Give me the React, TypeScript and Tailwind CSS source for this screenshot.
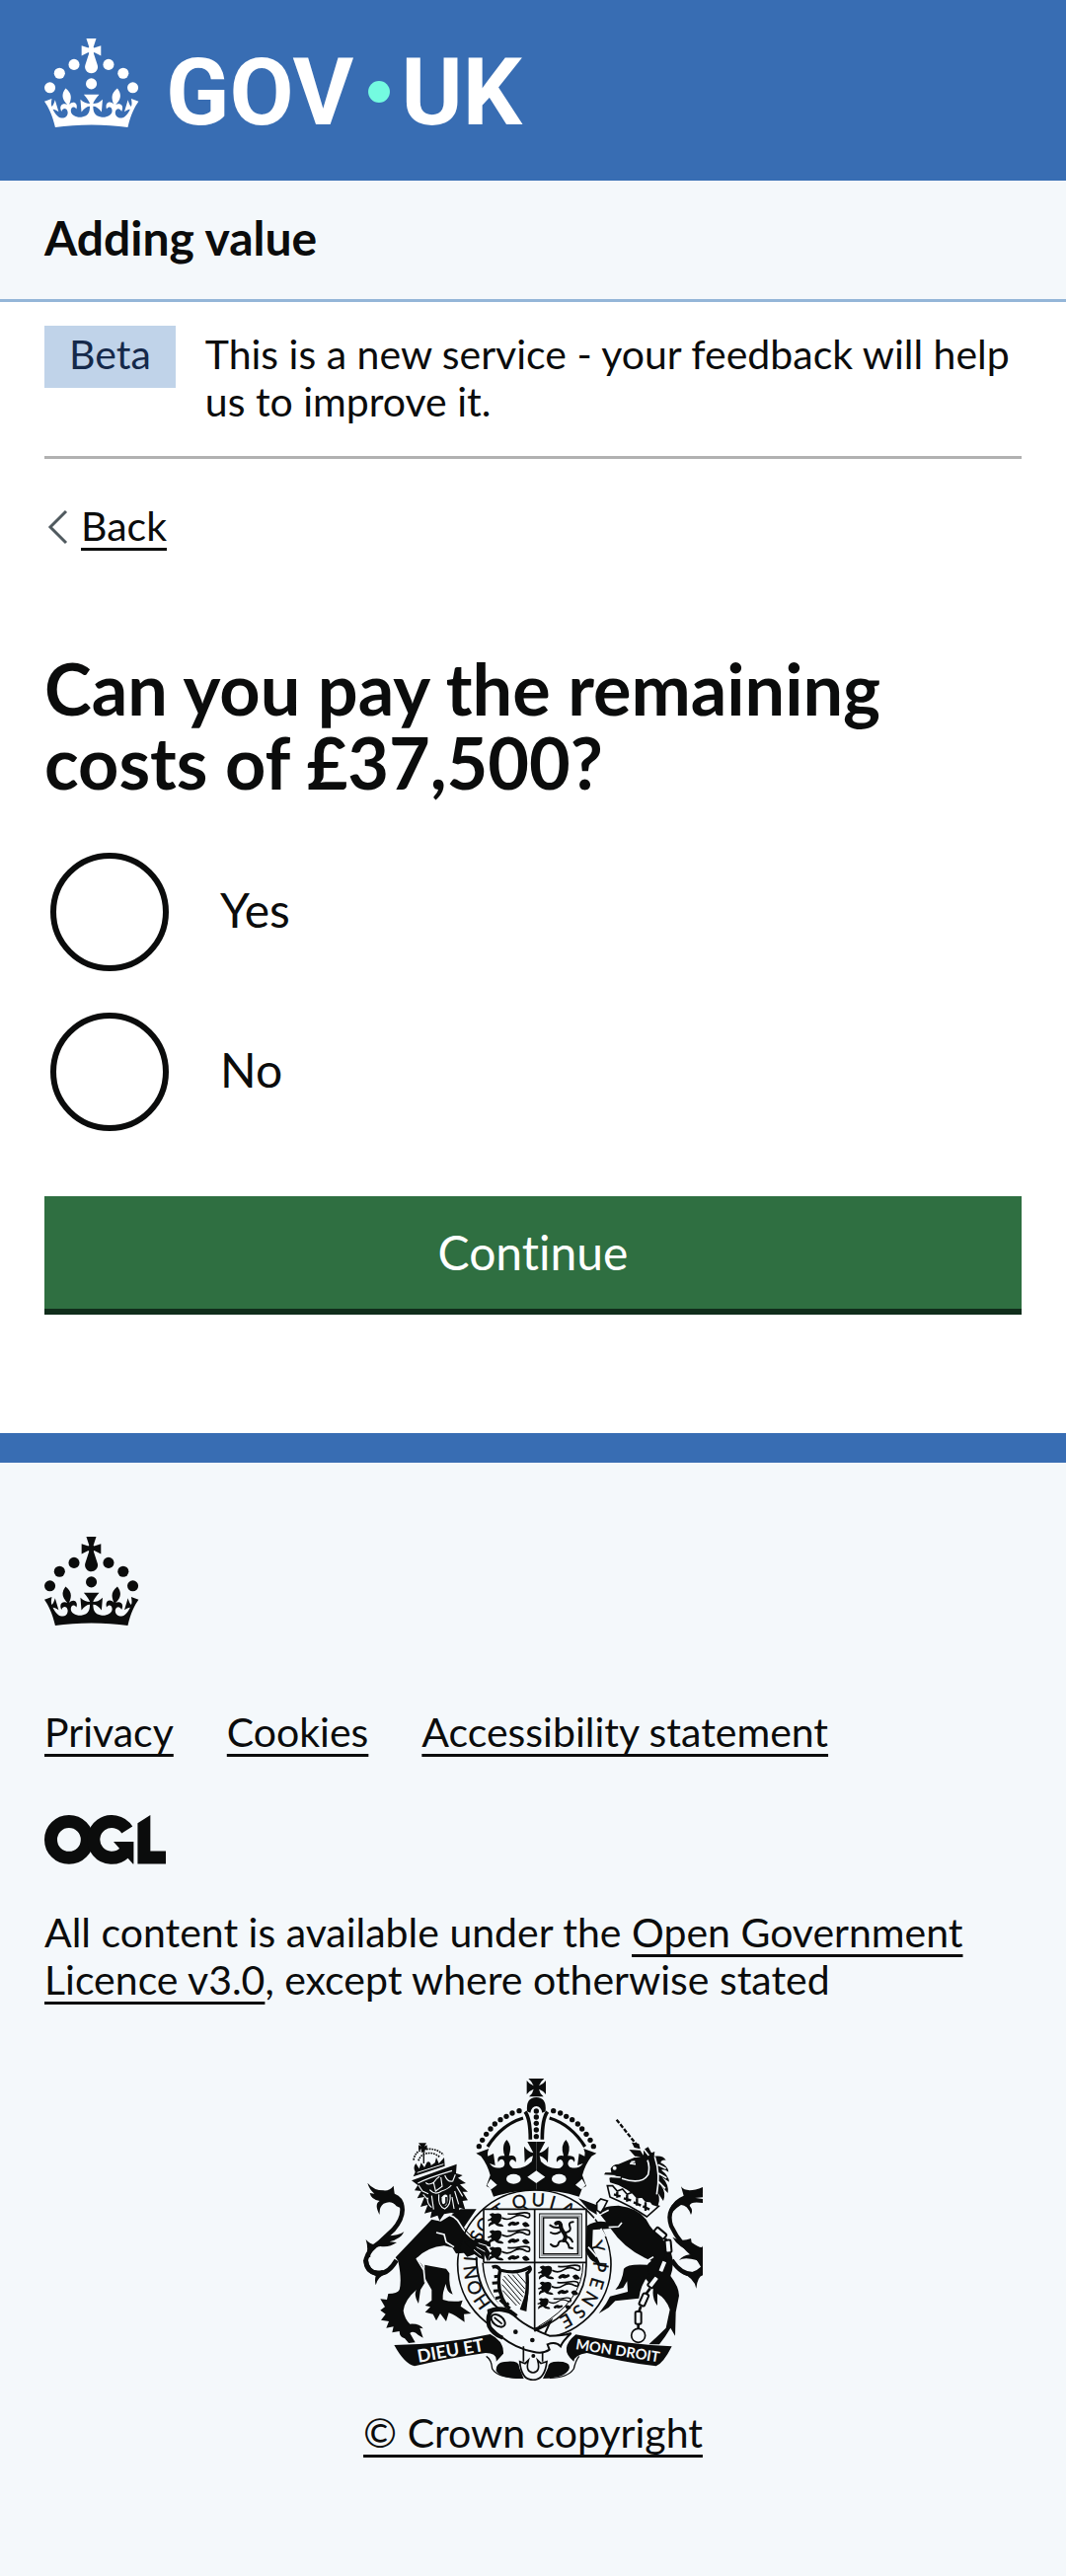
import React from "react";

const CROWN_PATH =
  "M33.1,9.8c.2-.1.3-.3.5-.5l4.6,2.4v-6.8l-4.6,1.5c-.1-.2-.3-.3-.5-.5l1.9-5.9h-6.7l1.9,5.9c-.2.1-.3.3-.5.5l-4.6-1.5v6.8l4.6-2.4c.1.2.3.3.5.5l-2.6,8c-.9,2.8,1.2,5.7,4.1,5.7h0c3,0,5.1-2.9,4.1-5.7l-2.6-8ZM37,37.9s-3.4,3.8-4.1,6.1c2.2,0,4.2-.5,6.4-2.8l-.7,8.5c-2-2.8-4.4-4.1-5.7-3.8.1,3.1.5,6.7,5.8,7.2,3.7.3,6.7-1.5,7-3.8.4-2.6-2-4.3-3.7-1.6-1.4-4.5,2.4-6.1,4.9-3.2-1.9-4.5-1.8-7.7,2.4-10.9,3,4,2.6,7.3-1.2,11.1,2.4-1.3,6.2,0,4,4.6-1.2-2.8-3.7-2.2-4.2.2-.3,1.7.7,3.7,3,4.2,1.9.3,4.7-.9,7-5.9-1.3,0-2.4.7-3.9,1.7l2.4-8c.6,2.3,1.4,3.7,2.2,4.5.6-1.6.5-2.8,0-5.3l5,1.8c-2.6,3.6-5.2,8.7-7.3,17.5-7.4-1.1-15.7-1.7-24.5-1.7h0c-8.8,0-17.1.6-24.5,1.7-2.1-8.9-4.7-13.9-7.3-17.5l5-1.8c-.5,2.5-.6,3.7,0,5.3.8-.8,1.6-2.3,2.2-4.5l2.4,8c-1.5-1-2.6-1.7-3.9-1.7,2.3,5,5.2,6.2,7,5.9,2.3-.4,3.3-2.4,3-4.2-.5-2.4-3-3.1-4.2-.2-2.2-4.6,1.6-6,4-4.6-3.7-3.7-4.2-7.1-1.2-11.1,4.2,3.2,4.3,6.4,2.4,10.9,2.5-2.8,6.3-1.3,4.9,3.2-1.8-2.7-4.1-1-3.7,1.6.3,2.3,3.3,4.1,7,3.8,5.4-.5,5.7-4.2,5.8-7.2-1.3-.2-3.7,1-5.7,3.8l-.7-8.5c2.2,2.3,4.2,2.7,6.4,2.8-.7-2.3-4.1-6.1-4.1-6.1h10.6,0Z";

function CrownShapes() {
  return (
    <g>
      <circle cx="20" cy="17.6" r="3.7" />
      <circle cx="10.2" cy="23.5" r="3.7" />
      <circle cx="3.7" cy="33.2" r="3.7" />
      <circle cx="43.3" cy="17.6" r="3.7" />
      <circle cx="53.2" cy="23.5" r="3.7" />
      <circle cx="59.7" cy="33.2" r="3.7" />
      <circle cx="31.7" cy="30.6" r="3.7" />
      <path d={CROWN_PATH} />
    </g>
  );
}

function GovLogo() {
  return (
    <svg viewBox="0 0 324 60" className="block h-[90px] w-[486px] overflow-visible" fill="#fff" role="img" aria-label="GOV.UK">
      <CrownShapes />
      <circle cx="226" cy="36" r="7.3" fill="#74fbe0" />
      <g fontFamily="Roboto, 'Liberation Sans', sans-serif" fontWeight="700" fontSize="63">
        <text x="82" y="58">GOV</text>
        <text x="241" y="58">UK</text>
      </g>
    </svg>
  );
}

function OglLogo() {
  return (
    <svg viewBox="0 0 483 196" className="block h-[50px] w-[123px]" role="img" aria-label="Open Government Licence">
      <g fill="none" stroke="#0b0c0c" strokeWidth="51">
        <circle cx="97.8" cy="97.8" r="72.3" />
        <path d="M329 59A72.3 72.3 0 1 0 318 150" />
      </g>
      <path fill="#0b0c0c" d="M275 106h80v88h-3ZM370.800 32.400 421.500 0v143H483v51H370.800Z" />
    </svg>
  );
}

const PEARLS = [[528, 146], [507, 153], [489, 163], [471, 173], [454, 186], [441, 201], [428, 217], [416, 235], [406, 254]];

const MOTTO: [string, number][] = [
  ["H", -125], ["O", -111], ["N", -97], ["I", -85], ["S", -64], ["O", -52], ["T", -34],
  ["Q", -14], ["U", 3], ["I", 16], ["A", 31], ["Y", 74], ["P", 92], ["E", 107], ["N", 122], ["S", 137], ["E", 151],
];

function CrownHalf() {
  return (
    <g>
      {PEARLS.map(([x, y]) => (
        <circle key={x} cx={x} cy={y} r="8" />
      ))}
      <path d="M540 168Q474 188 432 255" fill="none" stroke="#0b0c0c" strokeWidth="10" />
      <path d="M546 149Q562 170 562 233" fill="none" stroke="#0b0c0c" strokeWidth="11" />
      <path d="M397 275 436 261Q430 274 433 284L450 276 455 312 438 306Q452 326 478 317Q488 310 481 297Q472 288 464 302Q458 280 484 283Q473 252 490 234Q508 252 497 283Q522 278 518 302Q507 288 500 299Q494 312 508 320Q540 326 566 300L570 283Q552 290 545 304L543 254Q554 270 571 274L553 240H580V388Q510 388 450 407L440 380 428 375 440 342Q432 310 412 284Z" />
      <path d="M441 353 461 371 443 385 430 372Z" fill="#f4f8fb" />
      <ellipse cx="511" cy="353" rx="22" ry="15" fill="#f4f8fb" />
    </g>
  );
}

function PassantLion({ x, y, s }: { x: number; y: number; s: number }) {
  return (
    <g transform={`translate(${x} ${y}) scale(${s})`}>
      <path d="M4 6Q14-2 20 4Q40-2 42 12Q42 24 32 34Q46 34 48 42Q30 46 20 34Q10 36 2 44Q0 32 12 28Q2 20 12 14ZM60 36Q72 22 84 30Q96 24 96 34Q84 44 72 38Q64 46 60 36ZM104 34Q116 22 124 36Q132 42 118 44Q108 46 104 34Z" />
      <path d="M42 16Q60 26 78 14T116 14Q130 20 126 4Q116-2 98 2T60 4M12 20 0 24" fill="none" stroke="#0b0c0c" strokeWidth="5" />
    </g>
  );
}

const CHAIN: [number, number, number][] = [[957, 518, -50], [981, 558, -5], [964, 619, 22], [936, 666, 38], [907, 720, 24], [890, 775, 0]];

function RoyalArms() {
  return (
    <svg viewBox="54 48 1032 918" className="block h-[306px] w-[344px]" fill="#0b0c0c" role="img" aria-label="Royal coat of arms">
      {/* St Edward's crown */}
      <path d="M556 48H604Q592 58 588 70Q600 66 609 54V96Q600 84 588 80Q590 92 602 103H558Q570 92 572 80Q560 84 551 96V54Q560 66 572 70Q568 58 556 48Z" />
      <path d="M552 148Q548 105 580 105Q612 105 608 148L598 152Q594 132 580 132Q566 132 562 152Z" />
      {[147, 165, 184, 204, 224].map((y) => (
        <circle key={y} cx="580" cy={y} r="8" />
      ))}
      <CrownHalf />
      <g transform="translate(1160 0) scale(-1 1)">
        <CrownHalf />
      </g>
      <path d="M580 328 607 347 580 366 553 347Z" fill="#f4f8fb" />

      {/* Lion supporter */}
      <path d="M155 600Q128 646 95 640Q62 634 62 600Q68 570 104 546L145 508Q182 466 170 428Q160 402 132 404" fill="none" stroke="#0b0c0c" strokeWidth="14" />
      <path d="M67 365Q86 388 116 388Q134 390 146 374L150 404Q170 414 178 446L155 436Q140 416 116 428Q102 438 104 462Q86 430 104 420Q78 416 74 396L88 398Q72 384 67 365ZM62 537Q76 554 92 552L128 526Q160 526 178 514Q168 536 134 544L156 546Q134 562 106 558Q72 560 76 590L60 596Q72 570 62 537ZM54 600Q60 640 92 648Q88 660 92 676Q98 650 126 640L112 630Q74 640 68 596Z" />
      <path d="M350 445H398L360 500Q385 535 415 538L440 545 438 560 420 556 440 575 435 600 420 580 428 602 405 592 392 582 370 590 360 578 336 580 325 562 300 556Q250 560 216 594L234 616Q246 640 243 666L228 690 222 732Q206 704 216 690Q180 720 176 754Q180 780 196 794Q226 792 236 808L226 806 236 836 222 828Q206 812 196 822L212 850 192 852 180 838Q164 834 164 816L142 820 146 802 124 806 132 786 108 782 122 764 106 752 120 742 106 718 126 720 130 702Q158 702 164 690Q172 660 160 602L152 592 262 476 290 482Z" />
      <path d="M241 614Q280 622 306 626L316 640Q314 680 326 704Q308 700 305 672Q294 700 296 720Q328 730 356 722L350 740 382 762 360 764 362 788 336 770Q326 764 314 760L306 786 288 762 276 784 266 764 242 758 258 742 242 738 262 722 262 690 240 652Z" />
      <path d="M296 462Q330 458 348 490T392 538M276 516 300 522 306 545 330 560M242 668 238 630 216 594" fill="none" stroke="#f4f8fb" strokeWidth="5" />
      <path d="M201 358 338 308 336 336 356 342 342 350 366 366 348 370 372 392 356 392 372 418 356 420 364 446 346 440 344 462 322 456 300 460 286 480 280 464 258 472 262 452 240 458 250 432 228 438 240 408 218 412 230 390 210 388 220 372Z" />
      <g fill="none" stroke="#f4f8fb" strokeWidth="3.500">
        <path d="M220 366Q250 350 324 328M222 372 234 390 252 398M244 364Q252 374 268 364Q278 350 286 346M302 342Q310 364 326 360L334 340M268 364 274 390 294 376 290 348M256 386Q272 404 292 390Q312 384 322 372M250 410Q246 426 262 440M284 400Q280 436 302 444Q322 432 318 400M262 404 268 446M332 390 344 430M338 376 356 406M324 408 330 444M236 400 250 416" />
      </g>
      <path d="M290 412Q292 434 304 434Q312 430 310 404Q302 394 290 412Z" fill="#f4f8fb" />
      <path d="M290 410V426Q298 438 306 426V408" fill="none" stroke="#0b0c0c" strokeWidth="5" />
      <path d="M206 346 212 332Q204 318 214 306L224 322 230 304 240 318 248 302Q258 298 260 312L272 304 276 288 284 306 300 288 302 314Z" />
      <path d="M218 334 298 308" stroke="#f4f8fb" strokeWidth="3" />
      <path d="M207 296Q212 268 236 264Q274 256 298 280M222 298Q226 284 238 278Q264 268 286 286" fill="none" stroke="#0b0c0c" strokeWidth="5" strokeDasharray="5 3" />
      <path d="M238 272V306" stroke="#0b0c0c" strokeWidth="4" />
      <path d="M222 244H246L240 254 248 250V266L240 262 242 272H230L232 262 222 266V250L230 254Z" />

      {/* Garter ring and motto */}
      <ellipse cx="574" cy="613" rx="233" ry="226" fill="none" stroke="#0b0c0c" strokeWidth="5" />
      <path d="M398 590Q398 690 464 746M418 608Q424 690 476 738" fill="none" stroke="#0b0c0c" strokeWidth="6" />
      <g fontFamily="Lato, 'Liberation Sans', sans-serif" fontWeight="400" fontSize="55" textAnchor="middle" stroke="#0b0c0c" strokeWidth="1">
        {MOTTO.map(([c, a]) => (
          <text key={a} x="576" y="436" transform={`rotate(${a} 576 613)`}>
            {c}
          </text>
        ))}
      </g>
      {/* Shield */}
      <path d="M420 445H732V610Q732 740 575 816Q424 740 420 607Z" fill="#f4f8fb" />
      <path d="M420 607V445H732V610Q734 746 575 816V445M420 607H732" fill="none" stroke="#0b0c0c" strokeWidth="5" />
      <path d="M722 610Q722 724 586 802" fill="none" stroke="#0b0c0c" strokeWidth="3" />
      <PassantLion x={433} y={455} s={1} />
      <PassantLion x={433} y={507} s={1} />
      <PassantLion x={433} y={558} s={1} />
      <PassantLion x={586} y={615} s={1} />
      <PassantLion x={586} y={664} s={0.96} />
      <PassantLion x={584} y={714} s={0.8} />
      <rect x="590" y="459" width="128" height="134" fill="none" stroke="#0b0c0c" strokeWidth="3" />
      <rect x="597" y="466" width="114" height="120" fill="none" stroke="#9a9c9e" strokeWidth="5" />
      <rect x="602" y="471" width="104" height="110" fill="none" stroke="#0b0c0c" strokeWidth="4" />
      <g fill="none" stroke="#0b0c0c" strokeLinecap="round">
        <path d="M640 488Q650 482 654 492Q654 506 662 514Q674 528 664 540" strokeWidth="12" />
        <path d="M650 500Q636 504 622 494M652 514Q638 524 624 516M664 540Q678 546 680 562L690 564M660 542Q648 540 646 554Q636 564 624 552M670 528Q684 530 690 544M670 516Q688 512 682 498T692 484" strokeWidth="6" />
      </g>
      {/* Harp */}
      <path d="M446 622Q462 614 470 630Q520 644 560 622Q566 630 552 640Q556 700 542 750M470 630Q456 690 490 740M470 720 500 748" fill="none" stroke="#0b0c0c" strokeWidth="10" />
      <path d="M556 662V700L550 756 530 750 544 710Z" />
      <path d="M452 650 470 648M446 670 468 668M450 694 470 692M456 716 474 712M484 742 496 730" stroke="#0b0c0c" strokeWidth="9" />
      <path d="M478 658 534 724M482 648 540 712M494 644 544 700M508 644 546 688M522 640 550 672M476 674 530 734M478 692 520 738" stroke="#0b0c0c" strokeWidth="3" />

      {/* Lion's paw over the shield */}
      <path d="M362 545 412 534 440 545 442 560 426 556 440 578 432 604 420 578 410 594 394 582Z" />
      <path d="M404 548 430 556M398 560 424 574M390 568 412 586" stroke="#f4f8fb" strokeWidth="3" />

      {/* Garter buckle */}
      <path d="M434 752Q466 736 504 754Q520 790 620 830Q660 830 686 822Q660 846 654 862Q640 846 614 856L620 872Q600 886 570 878Q500 866 440 802Z" fill="#f4f8fb" stroke="#0b0c0c" strokeWidth="6" />
      <path d="M520 770Q490 744 448 752Q428 764 436 800Q448 826 478 836" fill="none" stroke="#0b0c0c" strokeWidth="12" />
      <ellipse cx="464" cy="784" rx="24" ry="15" transform="rotate(38 464 784)" fill="#f4f8fb" stroke="#0b0c0c" strokeWidth="6" />
      <path d="M452 774 476 794" stroke="#0b0c0c" strokeWidth="5" />
      <circle cx="517" cy="818" r="7" />
      <circle cx="568" cy="843" r="7" />
      <path d="M574 816 624 784 606 824M576 808 600 800" fill="none" stroke="#0b0c0c" strokeWidth="6" />

      {/* Lower scroll */}
      <path d="M428 892Q444 902 446 930Q462 958 530 958M710 892Q700 904 694 930Q676 958 620 958" fill="none" stroke="#0b0c0c" strokeWidth="4" />
      <path d="M458 936Q456 908 494 908Q530 906 528 926L542 960Q470 960 458 936ZM680 930Q686 908 646 908Q614 908 616 926L600 960Q670 958 680 930Z" />
      <path d="M541 862V908M599 880V908" stroke="#0b0c0c" strokeWidth="5" />
      <circle cx="571" cy="891" r="6" />
      <path d="M530 908Q534 964 570 964T612 908L594 914 584 904Q594 940 570 942Q546 940 556 904L546 914Z" fill="#f4f8fb" stroke="#0b0c0c" strokeWidth="5" />

      {/* Motto scrolls */}
      <path d="M148 858Q300 856 440 825Q482 846 480 884L458 908Q462 882 426 882Q310 898 210 922Q180 916 148 858Z" />
      <path d="M700 826Q850 856 992 862Q966 914 944 922Q850 912 734 882Q696 888 694 908Q646 870 700 826Z" />
      <g fill="#f4f8fb" fontFamily="Lato, 'Liberation Sans', sans-serif" fontWeight="700">
        <text transform="translate(222 911) rotate(-10)" fontSize="54">DIEU ET</text>
        <text transform="translate(698 870) rotate(9)" fontSize="44">MON DROIT</text>
      </g>

      {/* Unicorn supporter */}
      <path d="M824 173 892 258" stroke="#0b0c0c" strokeWidth="7" strokeDasharray="13 5" fill="none" />
      <path d="M862 264 896 266 908 286 880 284ZM870 242 892 246 896 262 878 258Z" />
      <path d="M806 322Q812 308 830 308L878 288Q896 290 906 280L906 264 920 256 930 274 940 270 938 284Q966 280 974 296Q960 294 958 304Q980 314 982 332Q968 322 960 326Q982 342 984 362L962 348Q984 370 980 396L958 372Q976 394 966 420L950 396Q960 424 944 442L900 418 856 386 830 372 804 364 802 350 824 342 786 340 790 334 808 334Z" />
      <circle cx="818" cy="320" r="6" fill="#f4f8fb" />
      <path d="M864 306 882 308M868 302 880 300M840 352Q900 372 920 340Q926 316 918 296M906 262 922 282M940 286Q958 340 946 400M950 310 974 322M952 336 976 350M952 362 972 382M808 346 836 348" fill="none" stroke="#f4f8fb" strokeWidth="5" />
      <path d="M796 374 804 408Q870 436 916 468L952 436 934 430 928 422 912 420 902 408 886 410 872 394 856 400 842 384 826 390 812 374Z" fill="#f4f8fb" stroke="#0b0c0c" strokeWidth="5" />
      <path d="M826 392V410M816 400 836 406M856 402V422M846 412 868 418M886 412V434M876 424 898 434M912 424V450M904 436 924 446" stroke="#0b0c0c" strokeWidth="7" />
      <path d="M708 412 762 432 764 462 738 446ZM770 456Q780 434 830 434Q888 440 914 476Q930 510 978 550Q1006 600 988 648Q1014 682 1014 708L1004 758 1002 830 988 806 972 832 954 856H922Q950 830 974 806L986 750Q974 716 948 702L948 738Q930 714 936 684L912 656Q906 616 930 602Q850 570 806 504L752 508 750 560 774 610Q742 610 730 570Q732 520 734 496Q760 478 792 484Z" />
      <path d="M800 500 830 498 840 486M752 478 772 462 800 448M776 504 790 528M738 560 764 590M920 600 936 590" fill="none" stroke="#f4f8fb" strokeWidth="5" />
      <path d="M918 614Q856 610 846 626Q842 664 820 690L844 684 856 664 858 696 804 710 792 732 770 762 800 744 820 724 892 716Q896 676 922 644Z" />
      <path d="M764 426 776 414 796 420 786 440 776 456 764 448Z" fill="#f4f8fb" stroke="#0b0c0c" strokeWidth="5" />
      <path d="M752 590 768 614 800 620" fill="none" stroke="#0b0c0c" strokeWidth="5" />
      {CHAIN.map(([x, y, a]) => (
        <rect key={y} x={x - 9} y={y - 19} width="18" height="38" rx="5" transform={`rotate(${a} ${x} ${y})`} fill="#f4f8fb" stroke="#0b0c0c" strokeWidth="6" />
      ))}
      <path d="M972 534 976 542M976 580 970 600M956 638 948 650M926 686 914 702M898 740 892 756M890 794V808" stroke="#0b0c0c" strokeWidth="8" />
      <circle cx="890" cy="829" r="21" fill="none" stroke="#0b0c0c" strokeWidth="5" />
      <path d="M992 600Q1030 660 1086 636M1086 606Q1020 560 990 496Q976 454 1004 430Q1030 404 1086 402" fill="none" stroke="#0b0c0c" strokeWidth="13" />
      <path d="M1020 376Q1036 398 1086 378V396L1060 410 1086 414V426Q1050 420 1046 434Q1058 448 1050 462Q1040 432 1020 432Q990 450 984 476Q980 430 1016 410L1028 404ZM994 530Q1020 546 1050 534L1052 546Q1086 570 1086 556V646Q1070 650 1066 686Q1060 654 1022 640Q1060 640 1080 620L1068 600Q1030 590 1014 600Q1030 580 1062 582Q1010 560 994 530Z" />
    </svg>
  );
}

const link =
  "underline decoration-[3px] underline-offset-[7px] [text-decoration-skip-ink:none]";

function Radio({ id, label }: { id: string; label: string }) {
  return (
    <div className="flex items-center pl-1.5">
      <input
        id={id}
        type="radio"
        name="remaining-costs"
        className="size-[120px] shrink-0 appearance-none rounded-full border-[6px] border-[#0b0c0c] bg-white checked:shadow-[inset_0_0_0_24px_#fff] checked:bg-[#0b0c0c]"
      />
      <label htmlFor={id} className="pb-1 pl-[52px] text-[48px] leading-[60px]">
        {label}
      </label>
    </div>
  );
}

export default function App() {
  return (
    <div className="min-h-screen bg-[#f4f8fb] text-[41px] leading-[48px] text-[#0b0c0c] [font-family:Lato,'Liberation_Sans',sans-serif] [font-variant-ligatures:none]">
      <header className="bg-[#386db3] px-[45px] pt-[39px] pb-[54px]">
        <a href="#" className="inline-block align-top">
          <GovLogo />
        </a>
      </header>
      <div className="border-b-[3px] border-[#94b6d8] px-[45px] pt-7 pb-8 text-[48px] leading-[60px] font-bold">
        <a href="#">Adding value</a>
      </div>

      <div className="bg-white px-[45px] pt-6 pb-[120px]">
        <div className="flex items-start gap-[30px] border-b-[3px] border-[#b1b1b1] pb-[31px]">
          <strong className="bg-[#c0d3e9] px-[25px] pt-[5px] pb-2.5 font-normal text-[#15294a]">Beta</strong>
          <p className="pt-[5px]">This is a new service - your feedback will help us to improve it.</p>
        </div>

        <a href="#" className="mt-11 flex w-fit items-center">
          <svg viewBox="0 0 37 48" className="h-12 w-[37px]" fill="none" stroke="#505a5f" strokeWidth="3" aria-hidden="true">
            <path d="M22 9 6 25 22 41" />
          </svg>
          <span className={link}>Back</span>
        </a>

        <form onSubmit={(e) => e.preventDefault()}>
          <fieldset className="mt-[103px]">
            <legend>
              <h1 className="text-[72px] leading-[75px] font-bold">Can you pay the remaining costs of £37,500?</h1>
            </legend>
            <div className="mt-[54px] flex flex-col gap-[42px]">
              <Radio id="remaining-yes" label="Yes" />
              <Radio id="remaining-no" label="No" />
            </div>
          </fieldset>
          <button type="submit" className="mt-[66px] block w-full border-b-[6px] border-[#102d1b] bg-[#2f6f41] py-[27px] text-[48px] leading-[60px] text-white">
            Continue
          </button>
        </form>
      </div>

      <footer className="border-t-[30px] border-[#386db3] px-[45px] pt-[75px] pb-[121px]">
        <svg viewBox="0 0 64 60" className="block h-[90px] w-24" fill="#0b0c0c" aria-hidden="true">
          <CrownShapes />
        </svg>
        <ul className="mt-[84px] flex flex-wrap gap-x-[54px]">
          <li><a href="#" className={link}>Privacy</a></li>
          <li><a href="#" className={link}>Cookies</a></li>
          <li><a href="#" className={link}>Accessibility statement</a></li>
        </ul>
        <div className="mt-[60px]">
          <OglLogo />
        </div>
        <p className="mt-[45px]">
          All content is available under the <a href="#" className={link}>Open Government Licence v3.0</a>, except where otherwise stated
        </p>
        <a href="#" className="mx-auto mt-[76px] flex w-fit flex-col items-center gap-[29px]">
          <RoyalArms />
          <span className={link}>© Crown copyright</span>
        </a>
      </footer>
    </div>
  );
}
